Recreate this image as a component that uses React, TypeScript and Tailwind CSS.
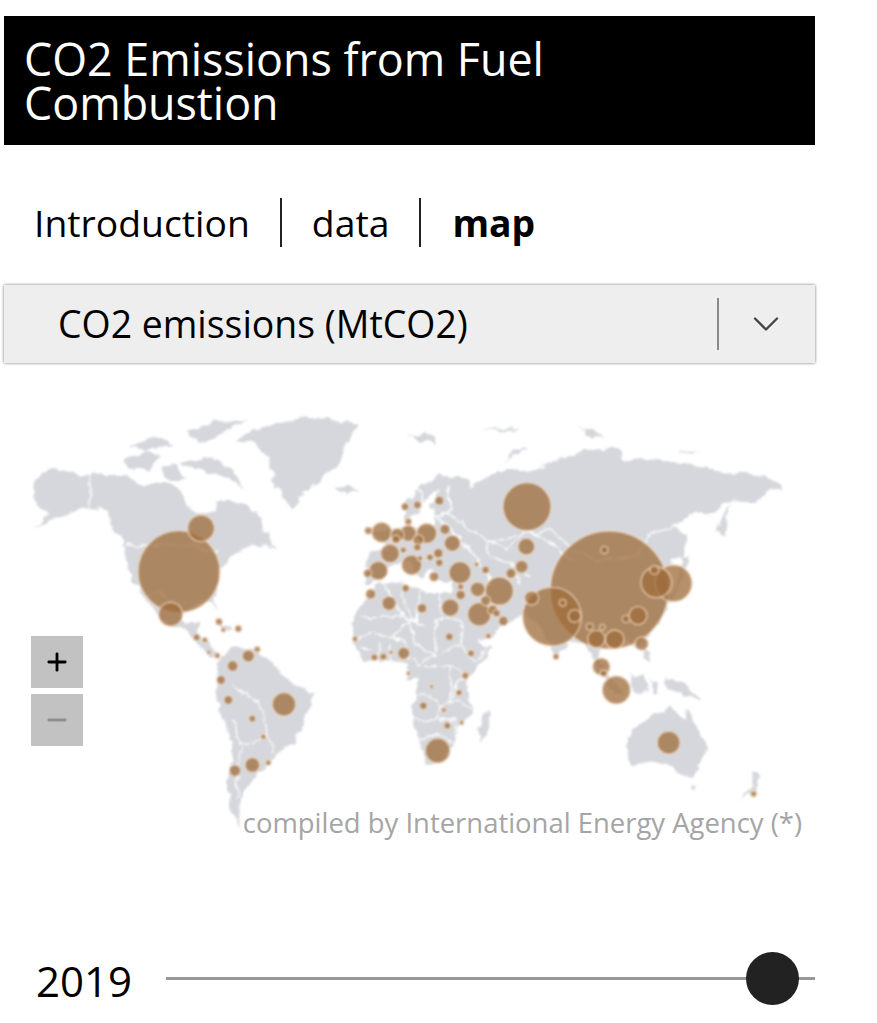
import { ChevronDown, Minus, Plus } from 'lucide-react'

type Bubble = [number, number, number]

// bubble coordinates come from crops of the map, each in 3x units
const americaBubbles: Bubble[] = [
  [537, 515, 123], [603, 385, 40], [512, 643, 36], [852, 913, 35], [757, 1095, 22], [705, 1112, 17],
  [698, 798, 16], [745, 768, 18], [685, 900, 13], [663, 840, 13], [715, 686, 10], [657, 665, 10],
  [670, 690, 7], [590, 712, 10], [615, 720, 8], [627, 757, 6], [652, 767, 8], [772, 748, 9],
  [757, 956, 10], [790, 1010, 8], [805, 1088, 8],
]

const europeBubbles: Bubble[] = [
  [337, 220, 24], [545, 290, 19], [513, 310, 15], [478, 363, 42], [413, 358, 22], [418, 433, 35],
  [360, 308, 33], [125, 187, 30], [260, 190, 30], [150, 250, 28], [215, 285, 30], [115, 302, 28],
  [83, 310, 12], [205, 190, 24], [172, 195, 20], [168, 208, 12], [235, 210, 16], [232, 232, 11],
  [295, 250, 14], [315, 178, 15], [282, 320, 14], [195, 110, 11], [232, 105, 11], [298, 92, 13],
  [85, 182, 11], [270, 262, 10], [298, 278, 11], [147, 400, 21], [92, 372, 15], [197, 355, 11],
  [246, 415, 14], [331, 413, 26], [437, 300, 11], [362, 375, 14], [362, 350, 9], [437, 392, 15],
  [458, 420, 15], [490, 453, 14], [470, 430, 11], [205, 155, 10], [190, 240, 9], [240, 265, 8],
  [410, 283, 7], [445, 498, 8],
]

const africaBubbles: Bubble[] = [
  [250, 317, 11], [357, 278, 9], [312, 330, 7], [322, 377, 10], [365, 368, 7], [293, 452, 37],
  [205, 220, 6], [45, 117, 8], [328, 110, 11], [393, 160, 10], [376, 227, 10], [191, 160, 18],
  [130, 170, 10], [103, 172, 10], [153, 157, 6], [275, 260, 6],
]

const asiaBubbles: Bubble[] = [
  [270, 320, 72], [268, 440, 25], [517, 570, 177], [345, 650, 88], [710, 550, 55], [658, 547, 46],
  [652, 510, 13], [284, 594, 21], [478, 717, 26], [533, 718, 28], [493, 800, 26], [538, 870, 42],
  [614, 731, 20], [603, 647, 27], [567, 657, 11], [413, 648, 19], [377, 608, 10], [357, 770, 9],
  [500, 820, 10], [458, 680, 10], [496, 682, 8], [695, 1028, 34], [950, 1182, 9], [502, 450, 11],
]

function Bubbles({ items }: { items: Bubble[] }) {
  return (
    <>
      {items.map(([cx, cy, r]) => (
        <circle
          key={`${cx}-${cy}`}
          cx={cx}
          cy={cy}
          r={r}
          fill="#9f6d3c"
          fillOpacity={0.76}
          stroke="#f3dcc6"
          strokeOpacity={0.8}
          strokeWidth={4}
        />
      ))}
    </>
  )
}

function WorldMap() {
  return (
    <svg
      className="absolute -left-1 top-[37px] h-[560px] w-[877px] blur-[1px]"
      viewBox="0 400 877 560"
      fill="#d5d7dc"
    >
      <defs>
        <filter
          id="coast"
          x="0"
          y="400"
          width="877"
          height="560"
          filterUnits="userSpaceOnUse"
          colorInterpolationFilters="sRGB"
        >
          <feTurbulence type="fractalNoise" baseFrequency="0.09" numOctaves="3" seed="4" result="noise" />
          <feDisplacementMap in="SourceGraphic" in2="noise" scale="9" xChannelSelector="R" yChannelSelector="G" />
        </filter>
      </defs>

      <g filter="url(#coast)">
        {/* page coordinates: eurasia and africa */}
        <path d="M403 507L420 487L440 475L463 477L473 490L470 487L497 470L537 470L557 460L584 450L620 448L624 460L650 460L684 463L724 473L764 475L784 488L770 490L754 503L730 500L714 513L690 513L672 527L685 533L684 557L670 560L667 587L667 610L650 633L640 650L624 640L617 647L604 647L597 657L610 680L594 660L584 643L570 640L557 658L540 627L524 613L504 627L487 637L467 647L450 613L453 585L453 580L436 580L430 568L421 579L410 562L395 565L388 567L383 580L368 583L363 573L372 552L388 548L372 533L392 528L408 525L418 528L436 522L432 505L440 490L428 498L418 515L405 520Z" />
        <path d="M352 623L360 607L380 583L407 585L427 593L443 593L460 598L473 637L487 648L493 648L480 663L467 677L468 697L472 713L457 727L455 743L440 763L427 765L418 740L412 720L415 693L420 680L407 680L408 663L383 660L365 662L353 643Z" />

        <g transform="translate(0 400) scale(0.3333)">
          <path d="M105 235L165 208L265 225L370 225L420 255L490 245L550 270L560 320L590 340L640 340L650 300L680 300L720 305L770 340L800 400L825 445L790 430L745 440L690 470L660 510L650 560L640 590L655 630L640 610L610 605L560 630L545 650L560 670L600 665L590 700L620 720L660 770L640 775L600 740L560 690L520 680L480 650L440 600L400 550L378 490L375 440L340 385L320 335L270 320L210 335L100 390L150 345L105 310L100 265Z" />
          <path d="M705 120L800 75L950 50L1080 75L1040 120L1020 190L960 240L900 290L880 325L860 310L820 240L810 180L770 130Z" />
          <path d="M375 180L440 150L480 170L450 210L390 205ZM390 140L470 110L520 130L470 150ZM555 90L650 65L740 60L690 90L600 130ZM540 190L620 170L700 210L730 270L680 230L620 220ZM480 200L530 195L560 240L500 240ZM1010 265L1050 258L1075 272L1040 290ZM640 660L700 685L680 692ZM1230 105L1290 100L1310 130L1260 125Z" />
          <path d="M650 790L690 740L760 750L830 800L870 850L940 880L915 960L880 1030L820 1070L790 1110L750 1150L720 1190L715 1260L730 1290L690 1240L685 1140L700 1040L650 900Z" />
        </g>

        <g transform="translate(437 400) scale(0.3333)">
          <path d="M180 205L230 150L280 140L215 170ZM430 88L470 90L500 115L460 110ZM135 90L250 85L210 95ZM715 155L790 155L740 162ZM835 400L880 310L860 400ZM735 470L760 470L740 530L700 610L690 600L725 540Z" />
          <path d="M465 760L520 830L560 880L530 880L490 820ZM580 830L620 820L630 870L590 880ZM620 745L645 760L640 790L620 770ZM640 840L670 860L650 880ZM680 835L740 850L800 905L740 880L690 860Z" />
          <path d="M565 1010L640 950L700 925L745 965L750 920L810 1040L770 1130L730 1130L690 1090L650 1080L580 1100ZM760 1160L780 1160L770 1178ZM900 1200L950 1165L945 1110L970 1130L955 1175Z" />
          <path d="M355 750L365 770L350 780Z" />
        </g>

        <g transform="translate(340 600) scale(0.3333)">
          <path d="M445 330L455 340L435 410L420 425L415 390L425 350Z" />
          <g fill="none" stroke="#fff" strokeWidth={4}>
            <path d="M45 120L90 100L160 110L205 60L235 60L235 30M205 60L225 130L285 165L285 60L300 55L370 60M285 165L360 130L370 60M360 130L400 190L440 145M285 165L235 195L200 170L190 130L160 110" />
            <path d="M250 200L330 200L335 260L330 300L290 320L275 285L225 280M335 200L380 230L350 250L335 300L390 320M215 360L350 360L345 400M290 320L290 360M230 420L300 400L345 430" />
            <path d="M120 130L110 180M150 130L155 180M60 140L90 150" />
          </g>
        </g>

        <g transform="translate(340 470) scale(0.3333)" fill="none" stroke="#fff" strokeWidth={4}>
          <path d="M440 205L500 240L560 180L640 220L700 280M440 205L450 260L510 280L570 320M510 280L540 340M130 340L190 440L250 470M190 340L200 420L240 470M300 370L300 450M240 370L230 470M60 440L190 440" />
          <path d="M235 50L260 120L215 140M330 40L330 120L290 140L340 190L400 250L420 290" strokeWidth={6} />
          <path d="M435 305L450 320L445 345" strokeWidth={9} />
        </g>

        <g transform="translate(0 400) scale(0.3333)" fill="none" stroke="#fff" strokeWidth={4}>
          <path d="M270 225L270 320M375 435L560 435L650 460M440 585L480 580L500 600L560 610M700 850L750 900L780 900L800 1000L760 1030L720 1030L700 960M720 1040L710 1190M800 1000L820 1060" />
        </g>
        <g transform="translate(437 400) scale(0.3333)" fill="none" stroke="#fff" strokeWidth={4}>
          <path d="M30 340L150 420L280 400L340 390L400 440L480 480L600 470L640 400L720 380" />
        </g>
      </g>

      <g transform="translate(0 400) scale(0.3333)">
        <Bubbles items={americaBubbles} />
      </g>
      <g transform="translate(340 470) scale(0.3333)">
        <Bubbles items={europeBubbles} />
      </g>
      <g transform="translate(340 600) scale(0.3333)">
        <Bubbles items={africaBubbles} />
      </g>
      <g transform="translate(437 400) scale(0.3333)">
        <Bubbles items={asiaBubbles} />
      </g>
    </svg>
  )
}

export default function App() {
  return (
    <div className="h-[1023px] w-[877px] overflow-hidden bg-white pl-1 pt-4 font-['Open_Sans',sans-serif] text-black">
      <div className="w-[811px]">
        <h1 className="h-[129px] bg-black pl-5 pt-[21px] text-[44.8px] font-normal leading-[44px] text-white">
          CO2 Emissions from Fuel
          <br />
          Combustion
        </h1>

        <nav className="mt-[53px] flex h-[49px] items-center pl-[30px] text-[37.3px]">
          <span>Introduction</span>
          <span className="ml-[30px] h-[49px] w-0.5 bg-[#222]" />
          <span className="ml-[30px]">data</span>
          <span className="ml-[30px] h-[49px] w-0.5 bg-[#222]" />
          <span className="ml-[31px] font-bold">map</span>
        </nav>

        <div className="mt-[38px] flex h-[78px] items-center bg-[#eeeeee] pl-[54px] text-[37.4px] shadow-[0_0_3px_rgba(0,0,0,0.55)]">
          <span className="flex-1">CO2 emissions (MtCO2)</span>
          <span className="h-[52px] w-0.5 bg-[#8a8a8a]" />
          <ChevronDown className="ml-[25px] mr-[27px] size-[44px] text-[#444]" strokeWidth={1.3} />
        </div>

        <div className="relative flex h-[477px] flex-col justify-end">
          <WorldMap />
          <div className="absolute left-[27px] top-[273px] flex flex-col gap-1.5">
            <div className="flex size-[52px] items-center justify-center bg-[#c2c2c2] text-black">
              <Plus className="size-7" strokeWidth={2.4} />
            </div>
            <div className="flex size-[52px] items-center justify-center bg-[#c2c2c2] text-[#8f8f8f]">
              <Minus className="size-7" strokeWidth={2.4} />
            </div>
          </div>
          <p className="relative translate-y-px pr-[13px] text-right text-[27.45px] leading-[36px] text-[#a5a5a5]">
            compiled by International Energy Agency (*)
          </p>
        </div>

        <div className="mt-[112px] flex items-center">
          <span className="w-[162px] pl-8 pt-[6px] text-[42px] leading-[46px]">2019</span>
          <div className="relative h-[3px] flex-1 bg-[#999]">
            <span className="absolute right-4 top-[-25px] size-[53px] rounded-full bg-[#222]" />
          </div>
        </div>
      </div>
    </div>
  )
}
